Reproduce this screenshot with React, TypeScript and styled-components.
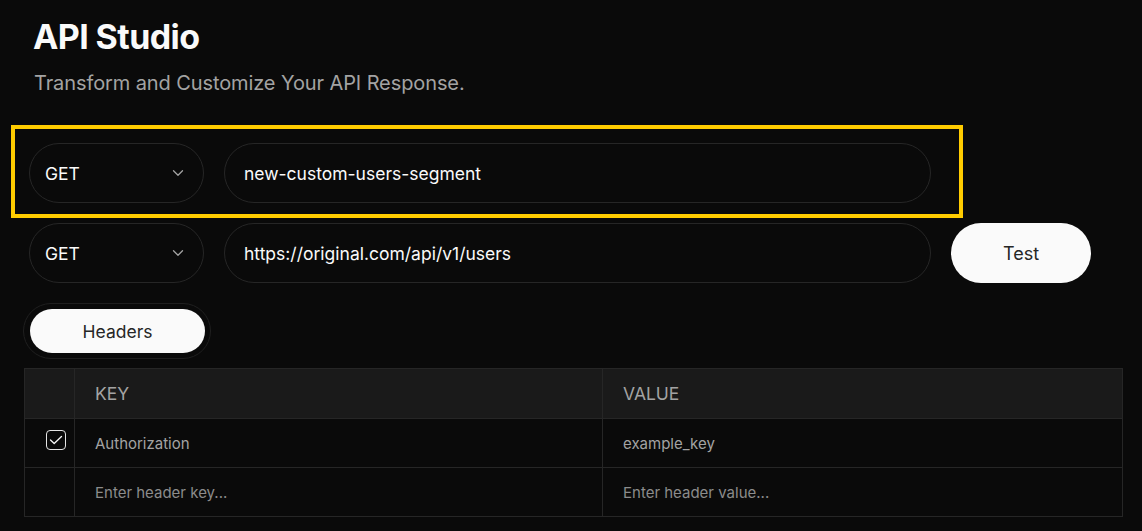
import React from 'react';
import styled, { createGlobalStyle } from 'styled-components';

const GlobalStyle = createGlobalStyle`
  html, body {
    margin: 0;
    padding: 0;
    background: #0a0a0a;
  }
  body {
    font-family: Inter, 'Noto Sans', sans-serif;
    color: #fafafa;
  }
`;

const Page = styled.main`
  padding: 17px 20px 16px 24px;
  min-height: 531px;
  box-sizing: border-box;
`;

const Title = styled.h1`
  margin: 0 0 0 9px;
  font-size: 34px;
  line-height: 40px;
  font-weight: 700;
  letter-spacing: -0.6px;
  color: #fafafa;
`;

const Subtitle = styled.p`
  margin: 12px 0 0 10px;
  font-size: 20px;
  line-height: 28px;
  color: #a3a3a3;
  letter-spacing: -0.1px;
`;

const Rows = styled.div`
  display: flex;
  flex-direction: column;
  gap: 20px;
  margin: 46px 0 0 5px;
`;

const Row = styled.div<{ $highlight?: boolean }>`
  position: relative;
  display: flex;
  gap: 20px;
  width: 1062px;

  ${(p) =>
    p.$highlight &&
    `
    &::before {
      content: '';
      position: absolute;
      top: -18px;
      left: -18px;
      width: 952px;
      bottom: -15px;
      border: 4px solid #ffcc00;
      box-sizing: border-box;
      pointer-events: none;
    }
  `}
`;

const Select = styled.div`
  width: 175px;
  height: 60px;
  box-sizing: border-box;
  border: 1px solid #262626;
  border-radius: 30px;
  display: flex;
  align-items: center;
  justify-content: space-between;
  padding: 0 19px 0 15px;
  font-size: 17.5px;
  color: #fafafa;
`;

const Input = styled.div`
  width: 707px;
  height: 60px;
  box-sizing: border-box;
  border: 1px solid #262626;
  border-radius: 30px;
  display: flex;
  align-items: center;
  padding: 0 19px;
  font-size: 17.5px;
  color: #fafafa;
`;

const TestButton = styled.button`
  width: 140px;
  height: 60px;
  border: none;
  border-radius: 30px;
  background: #fafafa;
  color: #262626;
  font-family: Inter, sans-serif;
  font-size: 18px;
`;

const Tabs = styled.div`
  margin: 20px 0 0 -1px;
  width: 188px;
  height: 56px;
  box-sizing: border-box;
  border: 1px solid #1f1f1f;
  border-radius: 28px;
  padding: 5px 5px 5px 6px;
  display: flex;
`;

const Tab = styled.div<{ $active?: boolean }>`
  flex: 1;
  border-radius: 23px;
  background: ${(p) => (p.$active ? '#fafafa' : 'transparent')};
  color: ${(p) => (p.$active ? '#262626' : '#a3a3a3')};
  display: flex;
  align-items: center;
  justify-content: center;
  padding-top: 1px;
  font-size: 17.5px;
`;

const Table = styled.div`
  margin-top: 9px;
  width: 1099px;
  box-sizing: border-box;
  border: 1px solid #262626;
  display: grid;
  grid-template-columns: 49px 528px 1fr;
`;

const Cell = styled.div<{ $head?: boolean; $first?: boolean; $muted?: boolean }>`
  height: 49px;
  box-sizing: border-box;
  display: flex;
  align-items: center;
  justify-content: ${(p) => (p.$first ? 'center' : 'flex-start')};
  padding-left: ${(p) => (p.$first ? '0' : '20px')};
  background: ${(p) => (p.$head ? '#1a1a1a' : 'transparent')};
  border-top: ${(p) => (p.$head ? 'none' : '1px solid #262626')};
  border-left: ${(p) => (p.$first ? 'none' : '1px solid #262626')};
  font-size: ${(p) => (p.$head ? '17.5px' : '15px')};
  color: ${(p) => (p.$head ? '#a3a3a3' : p.$muted ? '#8c8c8c' : '#a3a3a3')};
`;

const Check = styled.span`
  width: 20px;
  height: 20px;
  box-sizing: border-box;
  border: 1px solid #e5e5e5;
  border-radius: 4px;
  display: flex;
  align-items: center;
  justify-content: center;
  margin: -6px 0 0 12px;
`;

const Chevron = () => (
  <svg width="12" height="8" viewBox="0 0 12 8" fill="none">
    <path d="M1.5 1.8L6 6.2L10.5 1.8" stroke="#a3a3a3" strokeWidth="1.3" strokeLinecap="round" strokeLinejoin="round" />
  </svg>
);

export default function App() {
  return (
    <>
      <GlobalStyle />
      <Page>
        <Title>API Studio</Title>
        <Subtitle>Transform and Customize Your API Response.</Subtitle>
        <Rows>
          <Row $highlight>
            <Select>
              GET
              <Chevron />
            </Select>
            <Input>new-custom-users-segment</Input>
          </Row>
          <Row>
            <Select>
              GET
              <Chevron />
            </Select>
            <Input>https://original.com/api/v1/users</Input>
            <TestButton>Test</TestButton>
          </Row>
        </Rows>
        <Tabs>
          <Tab $active>Headers</Tab>
        </Tabs>
        <Table>
          <Cell $head $first />
          <Cell $head>KEY</Cell>
          <Cell $head>VALUE</Cell>
          <Cell $first>
            <Check>
              <svg width="14" height="10" viewBox="0 0 14 10" fill="none">
                <path d="M1.5 5L5.2 8.5L12.5 1.5" stroke="#fafafa" strokeWidth="1.3" strokeLinecap="round" strokeLinejoin="round" />
              </svg>
            </Check>
          </Cell>
          <Cell>Authorization</Cell>
          <Cell>example_key</Cell>
          <Cell $first />
          <Cell $muted>Enter header key...</Cell>
          <Cell $muted>Enter header value...</Cell>
        </Table>
      </Page>
    </>
  );
}
